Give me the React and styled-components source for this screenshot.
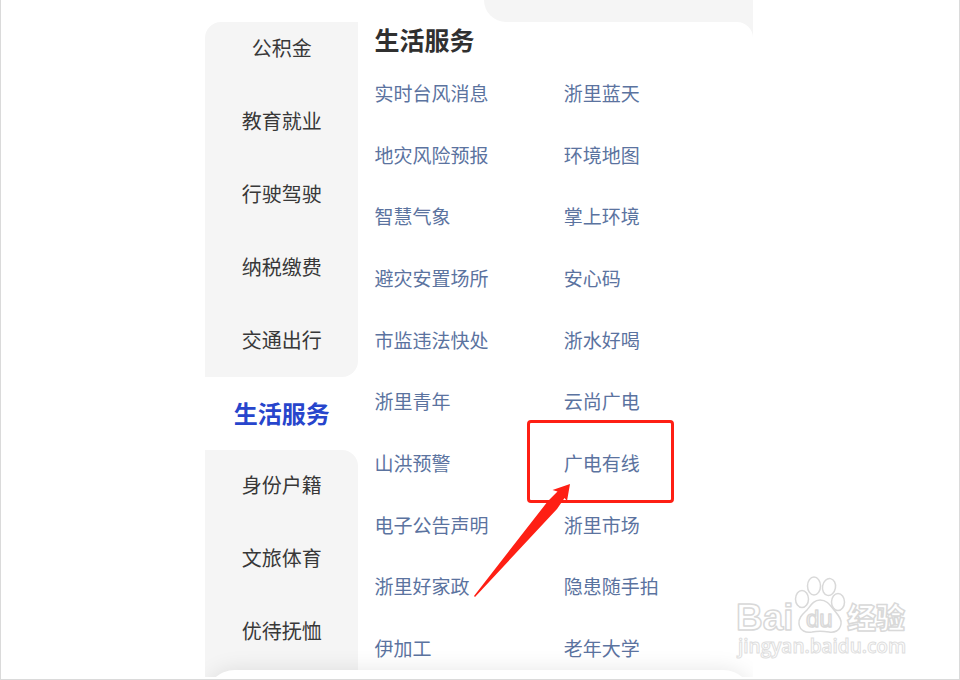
import React, { useState } from "react";
import styled, { createGlobalStyle } from "styled-components";

const GlobalStyle = createGlobalStyle`
  * {
    box-sizing: border-box;
  }

  body {
    margin: 0;
    background: #fff;
    font-family: "Noto Sans CJK SC", "Noto Sans", sans-serif;
  }
`;

const Frame = styled.div`
  position: relative;
  display: flex;
  justify-content: center;
  min-height: 100vh;
  padding-right: 2px;
  border: 1px solid #dadada;
  border-top: none;
  overflow: hidden;
`;

const Phone = styled.div`
  position: relative;
  display: flex;
  flex-direction: column;
  width: 100%;
  max-width: 548px;
`;

const TopStrip = styled.div`
  align-self: flex-end;
  width: 49%;
  height: 22px;
  background: #f5f5f5;
  border-bottom-left-radius: 24px;
`;

const Body = styled.div`
  flex: 1;
  display: flex;
`;

const Sidebar = styled.nav`
  display: flex;
  flex-direction: column;
  width: 28%;
  margin-bottom: 2px;
`;

const Group = styled.div`
  display: flex;
  flex-direction: column;
  gap: 44px;
  flex-grow: ${(props) => (props.$last ? 1 : 0)};
  padding: ${(props) => (props.$last ? "20px 0 0" : "11px 0 23px")};
  border-radius: ${(props) => (props.$last ? "0 16px 0 0" : "16px 0 16px 0")};
  background: #f5f5f5;
`;

const Category = styled.button`
  padding: 0;
  border: none;
  background: none;
  font-family: inherit;
  font-size: 20px;
  line-height: 29px;
  color: #383838;
  cursor: pointer;
`;

const ActiveCategory = styled(Category)`
  padding: 21px 0 23px;
  font-size: 24px;
  font-weight: 700;
  color: #2745cc;
`;

const PanelBack = styled.div`
  flex: 1;
  display: flex;
  background: linear-gradient(#f5f5f5 20px, #fff 20px);
`;

const Panel = styled.main`
  flex: 1;
  display: flex;
  flex-direction: column;
  padding-left: 16px;
  border-top-right-radius: 16px;
  background: #fff;
`;

const Title = styled.h1`
  margin: 0;
  padding-bottom: 6px;
  font-size: 25px;
  line-height: 34px;
  font-weight: 700;
  color: #303030;
`;

const ServiceList = styled.ul`
  flex: 1;
  display: grid;
  grid-template-columns: 1fr 1fr;
  grid-auto-rows: 1fr;
  margin: 0;
  padding: 0;
  list-style: none;
`;

const ServiceItem = styled.li`
  position: relative;
  display: flex;
  align-items: center;
`;

const ServiceLink = styled.a`
  font-size: 19px;
  line-height: 28px;
  color: #5b739f;
  text-decoration: none;
`;

const HighlightBox = styled.div`
  position: absolute;
  z-index: 1;
  top: -12px;
  left: -37px;
  width: 147px;
  height: 83px;
  border: 3px solid #fe1f14;
  border-radius: 4px;
`;

const Arrow = styled.svg`
  position: absolute;
  z-index: 1;
  top: 51px;
  left: -92px;
  width: 100px;
  height: 116px;
`;

const SheetClip = styled.div`
  position: absolute;
  left: 0;
  right: 0;
  bottom: 2px;
  height: 40px;
  padding-top: 33px;
  overflow: hidden;
  pointer-events: none;
`;

const Sheet = styled.div`
  height: 60px;
  border-radius: 30px 30px 0 0;
  background: #fff;
  box-shadow: 0 0 22px rgba(0, 0, 0, 0.1);
`;

const Watermark = styled.svg`
  position: absolute;
  right: 47px;
  bottom: 17px;
  width: 176px;
  height: 88px;
  overflow: visible;
`;

const before = ["公积金", "教育就业", "行驶驾驶", "纳税缴费", "交通出行"];
const after = ["身份户籍", "文旅体育", "优待抚恤"];

const services = [
  "实时台风消息",
  "浙里蓝天",
  "地灾风险预报",
  "环境地图",
  "智慧气象",
  "掌上环境",
  "避灾安置场所",
  "安心码",
  "市监违法快处",
  "浙水好喝",
  "浙里青年",
  "云尚广电",
  "山洪预警",
  "广电有线",
  "电子公告声明",
  "浙里市场",
  "浙里好家政",
  "隐患随手拍",
  "伊加工",
  "老年大学",
];

const BaiduLogo = () => (
  <Watermark viewBox="0 0 176 88" aria-label="Baidu 经验">
    <g fill="#fff" stroke="#d9d9d9" strokeWidth="1.5" strokeLinejoin="round">
      <text x="0" y="56" fontFamily="Liberation Sans, sans-serif" fontWeight="700" fontSize="37">
        Bai
      </text>
      <ellipse cx="66" cy="25" rx="6.5" ry="8.5" />
      <ellipse cx="78" cy="12" rx="6.5" ry="9" />
      <ellipse cx="93" cy="13" rx="6.5" ry="8.5" transform="rotate(10 93 13)" />
      <ellipse cx="102" cy="28" rx="6.5" ry="8.5" />
      <path d="M84 26 C91 26 94 31 98 36 C102 41 106 45 105 50 C104 57 98 59 93 58 C87 57 81 57 76 58 C70 59 64 57 63 50 C62 44 67 40 71 36 C75 31 78 26 84 26 Z" />
      <text x="70" y="53" fontFamily="Liberation Sans, sans-serif" fontWeight="400" fontSize="24">
        du
      </text>
      <text x="111" y="55" fontFamily="Noto Sans CJK SC, sans-serif" fontWeight="900" fontSize="29">
        经验
      </text>
    </g>
    <text
      x="2"
      y="79"
      fontFamily="Open Sans, sans-serif"
      fontWeight="600"
      fontSize="19"
      fill="#fff"
      stroke="#dedede"
      strokeWidth="1"
    >
      jingyan.baidu.com
    </text>
  </Watermark>
);

const App = () => {
  const [active] = useState("生活服务");

  return (
    <>
      <GlobalStyle />
      <Frame>
        <Phone>
          <TopStrip />
          <Body>
            <Sidebar>
              <Group>
                {before.map((name) => (
                  <Category key={name}>{name}</Category>
                ))}
              </Group>
              <ActiveCategory aria-current="true">{active}</ActiveCategory>
              <Group $last>
                {after.map((name) => (
                  <Category key={name}>{name}</Category>
                ))}
              </Group>
            </Sidebar>
            <PanelBack>
              <Panel>
                <Title>{active}</Title>
                <ServiceList>
                  {services.map((name) => (
                    <ServiceItem key={name}>
                      <ServiceLink href="#">{name}</ServiceLink>
                      {name === "广电有线" && (
                        <>
                          <HighlightBox />
                          <Arrow viewBox="0 0 100 116">
                            <path
                              d="M98 1 L80.5 7 L85.5 8.5 L76 18 L2 113 L3 114 L85 26 L92.5 15 L95 18 Z"
                              fill="#fe1f14"
                            />
                          </Arrow>
                        </>
                      )}
                    </ServiceItem>
                  ))}
                </ServiceList>
              </Panel>
            </PanelBack>
          </Body>
          <SheetClip>
            <Sheet />
          </SheetClip>
        </Phone>
        <BaiduLogo />
      </Frame>
    </>
  );
};

export default App;
